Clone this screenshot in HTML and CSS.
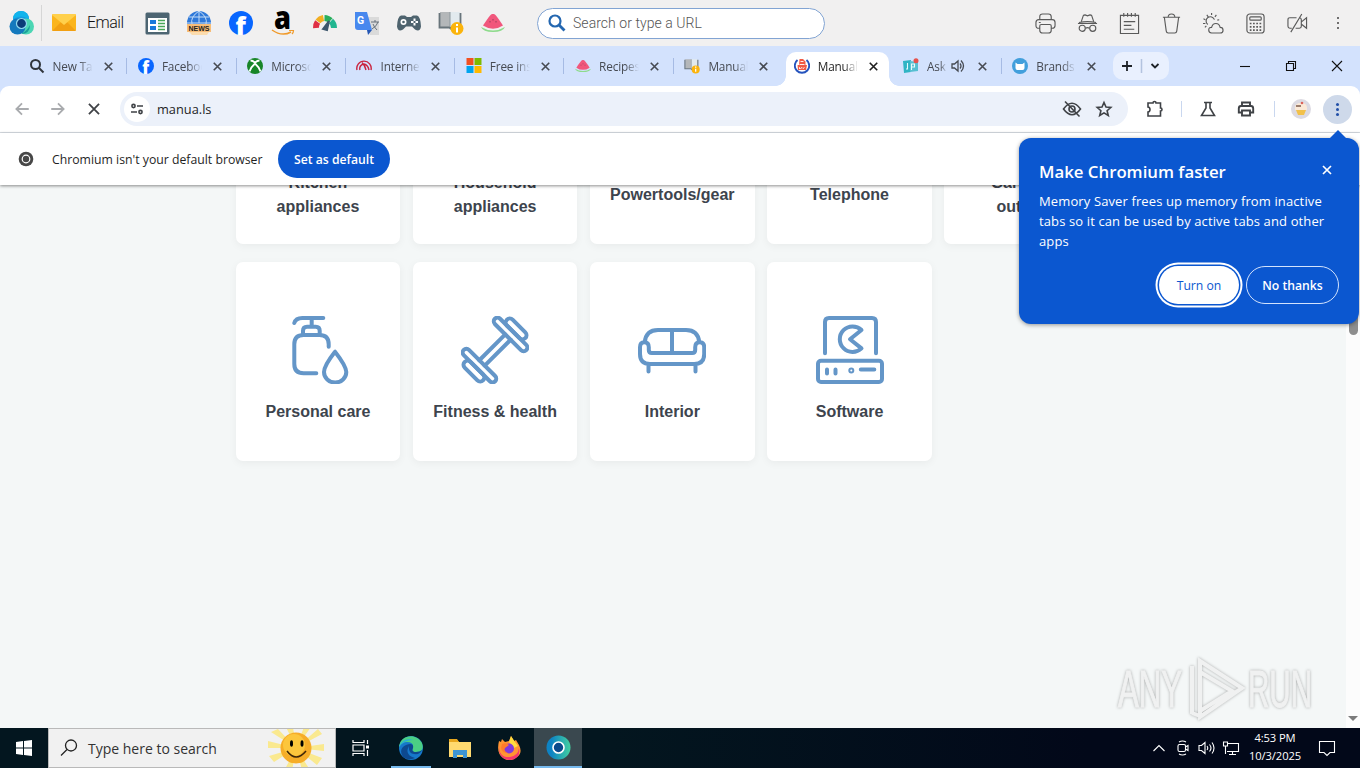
FILE: index.html
```html
<!DOCTYPE html>
<html lang="en">
  <head>
    <meta charset="utf-8" />
    <title>manua.ls</title>
    <link rel="stylesheet" href="styles.css">
  </head>
  <body>
    <!-- shared icons -->
    <svg class="defs">
      <symbol id="close" viewBox="0 0 16 16"><path d="M4 4l8 8M12 4l-8 8" fill="none" stroke="currentColor" stroke-width="1.7" /></symbol>
      <symbol id="melon" viewBox="0 0 24 24">
        <path d="M0 16q12 7 24 0q-2 5-12 5T0 16z" fill="#8edb8c" />
        <path d="M12 3c2 0 3 1 10 11.500q-10 6.500-20 0C9 4 10 3 12 3z" fill="#f1577c" />
        <path d="M9 10v1.500M12 8v1.500M15 10v1.500" stroke="#98405a" stroke-width="1" />
      </symbol>
      <symbol id="fb" viewBox="0 0 24 24">
        <circle cx="12" cy="12" r="12" fill="#0866ff" />
        <text x="6.500" y="23.500" font-family="Open Sans" font-weight="800" font-size="25" fill="#fff">f</text>
      </symbol>
      <symbol id="book" viewBox="0 0 26 26">
        <path d="M2 2h10v15H2z" fill="#b4b7b9" /><path d="M12 2h10v15H12z" fill="#e2eaee" />
        <path d="M1.500 3v14.500h10l1 1 1-1h9V3" fill="none" stroke="#68747b" stroke-width="1.800" />
        <path d="M12 2v15" stroke="#8d979c" />
        <circle cx="19" cy="18.500" r="6.500" fill="#fbb40c" />
        <path d="M19 14v2M19 17.500v5" stroke="#fff" stroke-width="2" />
      </symbol>
    </svg>

    <div class="launcher">
      <span class="logo">
        <svg width="26" height="26" viewBox="0 0 26 26">
          <circle cx="12" cy="9" r="8" fill="#159be0" /><circle cx="17" cy="16.500" r="8" fill="#4cd6b4" />
          <circle cx="8.500" cy="16.500" r="8" fill="#1479bd" /><path d="M4 9a8 8 0 0116 0q-8-5-16 0z" fill="#11b4ec" />
          <path d="M12 24q9 0 9-9-3 6-9 9z" fill="#1c9f9c" />
          <circle cx="12.500" cy="13.500" r="5" fill="#0b3b78" stroke="#8fd9ee" stroke-width="1.200" />
        </svg>
      </span>
      <span class="email">
        <svg width="24" height="18" viewBox="0 0 24 18">
          <rect width="24" height="17" rx="1.500" fill="#fbb51c" /><path d="M0 17L9 8h6l9 9z" fill="#f2a012" />
          <path d="M0 1q0-1 1-1h22q1 0 1 1L12 11z" fill="#ffd04c" />
        </svg>
        Email
      </span>
      <div class="apps">
        <span><svg width="25" height="23" viewBox="0 0 25 23">
          <rect x=".500" y=".500" width="24" height="22" rx="1.500" fill="#4d6572" /><path d="M3 6h19v14H3z" fill="#fff" />
          <path d="M5 8h6v4H5zM5 14h6v4H5z" fill="#1a79db" /><path d="M13 8.500h7M13 11.500h7M13 14.500h7M13 17.500h7" stroke="#48a858" stroke-width="1.5" />
        </svg></span>
        <span><svg width="26" height="26" viewBox="0 0 26 26">
          <circle cx="13" cy="13" r="12" fill="#2f79d9" /><path d="M1 13h24M3 7h20M13 1v12M13 1q-9 6-7 13M13 1q9 6 7 13" fill="none" stroke="#c3ddf8" stroke-width="1" />
          <path d="M1 14h24v8H1z" fill="#f7bd78" /><path d="M3 22h20l-2 3H6z" fill="#fbdcae" />
          <text x="2.500" y="20.800" font-family="Liberation Sans" font-weight="700" font-size="7" fill="#222">NEWS</text>
        </svg></span>
        <span><svg width="24" height="24"><use href="#fb" /></svg></span>
        <span><svg width="26" height="27" viewBox="0 0 26 27">
          <text x="4" y="19" font-family="Open Sans" font-weight="800" font-size="31" textLength="17" lengthAdjust="spacingAndGlyphs">a</text>
          <path d="M2 20q10 7 19 2" fill="none" stroke="#f09a2b" stroke-width="1.500" /><path d="M19 20.500h4.500q0 2-1.500 3.500" fill="none" stroke="#f09a2b" stroke-width="1.200" />
        </svg></span>
        <span><svg width="26" height="26" viewBox="0 0 26 26" fill="none" stroke-width="6">
          <path d="M4 18a9 9 0 011.600-6" stroke="#df3044" /><path d="M6 11.500a9 9 0 015.500-3.500" stroke="#f2ae22" />
          <path d="M12.500 8a9 9 0 016 2.500" stroke="#2aae5b" /><path d="M19 11a9 9 0 013 7" stroke="#22b690" />
          <path d="M11 19l6-8-2 9z" fill="#3c566c" stroke="#3c566c" stroke-width="2" />
        </svg></span>
        <span><svg width="26" height="26" viewBox="0 0 26 26">
          <path d="M11 7h14v18H16z" fill="#dadada" /><path d="M1 2h12l5 18H4q-3 0-3-3z" fill="#4888ee" /><path d="M13 20h5l-4 5z" fill="#2456b4" />
          <text x="3" y="14" font-family="Roboto" font-weight="700" font-size="10.500" fill="#fff">G</text>
          <path d="M17 12h8M21 10v2M18 19q5-3 6-7M19 14q1 3 4 6" fill="none" stroke="#66717a" />
        </svg></span>
        <span><svg width="26" height="20" viewBox="0 0 26 20">
          <path d="M5 2.500h4l2 1.500h4l2-1.500h4q3.500 1 4 11-1 6-6 3l-3-3h-6l-3 3q-5 3-6-3Q1.500 3.500 5 2.500z" fill="#4e636e" />
          <circle cx="7.500" cy="9" r="3" fill="#fff" /><circle cx="7.500" cy="9" r="1.300" fill="#4e636e" />
          <path d="M18.500 5.500v7M15 9h7" stroke="#fff" stroke-width="2" stroke-dasharray="2.500 2" />
        </svg></span>
        <span><svg width="26" height="26"><use href="#book" /></svg></span>
        <span><svg width="24" height="24"><use href="#melon" /></svg></span>
      </div>
      <div class="search">
        <svg width="18" height="18" viewBox="0 0 18 18" fill="none" stroke="#2467b0" stroke-width="2.200"><circle cx="7" cy="7" r="5.500" /><path d="M11 11l5.500 5.500" stroke-width="2.800" /></svg>
        Search or type a URL
      </div>
      <div class="tools">
        <span><svg viewBox="0 0 22 22"><path d="M5 7V4q0-3 3-3h6q3 0 3 3v3M5 16H4q-3 0-3-3v-3q0-3 3-3h14q3 0 3 3v3q0 3-3 3h-1M5 13.500q0-1.500 1.500-1.500h9q1.500 0 1.500 1.500V18q0 3-3 3H8q-3 0-3-3zM4 10h2" /></svg></span>
        <span><svg viewBox="0 0 22 22"><path d="M4.500 9l2-6q.500-1 2-1l2.500 1 2.500-1q1.500 0 2 1l2 6M2 10q9-2 18 0M1 11h20M9 16q2-1.500 4 0" /><circle cx="5.500" cy="16" r="3.200" /><circle cx="16.500" cy="16" r="3.200" /></svg></span>
        <span><svg viewBox="0 0 22 22"><path d="M1.500 2.500h19v19h-19zM5 0v4M9 0v4M13 0v4M17 0v4M5 9h12M5 13h8M5 17h11" /></svg></span>
        <span><svg viewBox="0 0 22 22"><path d="M2 4.500h18M3.500 4.500l2 14.500q.300 2 2 2h7q1.700 0 2-2l2-14.500M7.500 4.500q0-3.500 3.500-3.500t3.500 3.500" /></svg></span>
        <span><svg viewBox="0 0 22 22"><path d="M9 21q-3-.500-3-3.300T9 15q1-4 4.500-4t4.500 4q3 0 3 3t-3 3zM5 12a4.500 4.500 0 117-5M9 0v2M4 2l1.500 2M.500 6l2 1M0 11h2.500M2 15l1.500-1.500M14 2l-1.500 2M17 7l-2 .500" /></svg></span>
        <span><svg viewBox="0 0 22 22"><rect x="2" y="1" width="18" height="20" rx="3" /><rect x="5" y="4" width="12" height="3.500" rx="1" /><path d="M5 11h12M5 14.500h12M5 18h12" stroke-width="1.800" stroke-dasharray="1.800 1.600" /></svg></span>
        <span><svg viewBox="0 0 22 22"><path d="M10 5H3Q1 5 1 7v7q0 2 2 2h2M9 16h4q2 0 2-2V7q0-1.500-1.500-2M15.500 9l5-4v11l-5-4M15.500 1L4 20" /></svg></span>
        <span class="dots"></span>
      </div>
    </div>

    <div class="tabs">
      <div class="tab">
        <svg class="fav" viewBox="0 0 16 16" fill="none" stroke="#30353c" stroke-width="2"><circle cx="6.500" cy="6.500" r="4.500" /><path d="M10 10l4.500 4.500" /></svg>
        <span class="title">New Tab</span><svg class="close"><use href="#close" /></svg>
      </div>
      <div class="tab">
        <svg class="fav"><use href="#fb" /></svg>
        <span class="title">Facebook</span><svg class="close"><use href="#close" /></svg>
      </div>
      <div class="tab">
        <svg class="fav" viewBox="0 0 16 16"><circle cx="8" cy="8" r="8" fill="#178528" /><path d="M3.500 2.500q2 0 4.500 2 2.500-2 4.500-2M8 5.500Q3.500 9.500 2.500 13.500M8 5.500q4.500 4 5.500 8" fill="none" stroke="#fff" stroke-width="1.800" /></svg>
        <span class="title">Microsoft</span><svg class="close"><use href="#close" /></svg>
      </div>
      <div class="tab">
        <svg class="fav" viewBox="0 0 16 16" fill="none" stroke="#c9243f" stroke-width="1.400"><path d="M1 12a7.200 7.200 0 1114 0M4 12a4.500 4.500 0 014-6M8 6q4 1 5 6M6 4.500q3 3 4 7.500" /></svg>
        <span class="title">Internet</span><svg class="close"><use href="#close" /></svg>
      </div>
      <div class="tab">
        <svg class="fav" viewBox="0 0 16 16"><path d="M.500 0h7v7h-7z" fill="#f25022" /><path d="M8.500 0h7v7h-7z" fill="#7fba00" /><path d="M.500 8h7v7h-7z" fill="#00a4ef" /><path d="M8.500 8h7v7h-7z" fill="#ffb900" /></svg>
        <span class="title">Free install</span><svg class="close"><use href="#close" /></svg>
      </div>
      <div class="tab">
        <svg class="fav"><use href="#melon" /></svg>
        <span class="title">Recipes</span><svg class="close"><use href="#close" /></svg>
      </div>
      <div class="tab plain">
        <svg class="fav"><use href="#book" /></svg>
        <span class="title">Manuals</span><svg class="close"><use href="#close" /></svg>
      </div>
      <div class="tab active plain">
        <svg class="fav" viewBox="0 0 16 16"><path d="M3.500 2a7.200 7.200 0 109 0" fill="none" stroke="#2553bd" stroke-width="1.900" /><path d="M5.500 1H9l2.500 2.500V7H13l-1 5H4L3.500 7H5z" fill="#f15a45" /><path d="M6.500 3.500h3M5.500 6.500h5M5.500 11V9.500l1 1 1.500-1 1 1 1.500-1" fill="none" stroke="#fff" stroke-width=".9" /></svg>
        <span class="title">Manuals</span><svg class="close"><use href="#close" /></svg>
      </div>
      <div class="tab audio">
        <svg class="fav" viewBox="0 0 16 16"><path d="M0 3l8-1v12l-7 1z" fill="#30b4c4" /><path d="M7 3l8 1v9l-8 1z" fill="#56bfd1" /><circle cx="13" cy="2.800" r="2.500" fill="#e6534e" /><path d="M4.500 5v6H3M8.500 12V6h3v3h-3" fill="none" stroke="#e6fafc" stroke-width="1.100" /></svg>
        <span class="title">Ask</span>
        <svg class="sound" viewBox="0 0 14 14" fill="none" stroke="#464a52" stroke-width="1.300"><path d="M1 5h2.500L7 2v10L3.500 9H1z" /><path d="M9 4.500q2 2.500 0 5M10 1.500q5 5.500 0 11" /></svg>
        <svg class="close"><use href="#close" /></svg>
      </div>
      <div class="tab plain">
        <svg class="fav" viewBox="0 0 16 16"><circle cx="8" cy="8" r="8" fill="#429fdc" /><path d="M3.500 4.500l2 1.500h5l2-1.500v5.500q0 2-2 2h-5q-2 0-2-2z" fill="#fff" /></svg>
        <span class="title">Brands</span><svg class="close"><use href="#close" /></svg>
      </div>
      <div class="new-tab">
        <svg width="56" height="28" viewBox="0 0 56 28" fill="none" stroke="#1e2227" stroke-width="1.800"><path d="M14 9v10M9 14h10" /><path d="M28.500 7v14" stroke="#b3c3df" stroke-width="1.500" /><path d="M38.500 12l3.500 3.500 3.500-3.500" /></svg>
      </div>
      <div class="window-buttons">
        <svg width="12" height="12" viewBox="0 0 12 12"><path d="M1 6.500h10" /></svg>
        <svg width="12" height="12" viewBox="0 0 12 12"><path d="M1.500 3.500h7v7h-7zM3.500 3.500v-2h7v7h-2" /></svg>
        <svg width="12" height="12" viewBox="0 0 12 12"><path d="M1 1l10 10M11 1L1 11" /></svg>
      </div>
    </div>

    <div class="toolbar-wrap">
      <div class="toolbar">
        <div class="nav">
          <svg class="dim" viewBox="0 0 16 16"><path d="M14 8H3M8 3L3 8l5 5" /></svg>
          <svg class="dim" viewBox="0 0 16 16"><path d="M2 8h11M8 3l5 5-5 5" /></svg>
          <svg viewBox="0 0 16 16"><path d="M3.500 3.500l9 9M12.500 3.500l-9 9" /></svg>
        </div>
        <div class="omnibox">
          <span class="site-info"><svg width="14" height="14" viewBox="0 0 14 14" fill="none" stroke="#24282d" stroke-width="1.500"><circle cx="3.500" cy="4" r="1.600" /><path d="M7 4h6M1 10h6" /><circle cx="10.500" cy="10" r="1.600" /></svg></span>
          <span class="url">manua.ls</span>
          <svg width="20" height="20" viewBox="0 0 20 20"><path d="M1.500 10Q10-1.500 18.500 10 10 21.500 1.500 10z" /><circle cx="10" cy="10" r="3" /><path d="M3 2.500l14.500 15" /></svg>
          <svg width="18" height="18" viewBox="0 0 18 18"><path d="M9 2.500l2 4.600 4.800.400-3.700 3.200 1.200 4.800L9 12.900l-4.300 2.600 1.200-4.800L2.200 7.500 7 7.100z" /></svg>
        </div>
        <div class="actions">
          <svg width="20" height="20" viewBox="0 0 20 20"><path d="M3 4h5q0-1.500 1.500-1.500T11 4h4.500v5Q17 9 17 10.500T15.500 12v5H3v-4q2-.300 2-2.500T3 8z" /></svg>
          <i></i>
          <svg class="flask" width="18" height="18" viewBox="0 0 18 18"><path d="M5 2.500h8M7 3v5l-4.500 7.500h13L11 8V3" /></svg>
          <svg class="print" width="18" height="18" viewBox="0 0 18 18"><path d="M5 6V2.500h8V6M5 12.500H1.800V8.500Q1.800 6 4 6h10q2.200 0 2.200 2.500v4H13M5 10.500h8V15.500H5z" stroke-width="1.900" /></svg>
          <i></i>
          <svg class="avatar" width="20" height="20" viewBox="0 0 20 20"><circle cx="10" cy="10" r="10" fill="#dcdae2" /><path d="M4 9q0-5 6-5t6 5v2H4z" fill="#fbe9d7" /><path d="M5 11h10l-2 5H7z" fill="#f2c14b" /><path d="M5 7h5" stroke="#684535" stroke-width="1.300" /><circle cx="11" cy="4" r="1.300" fill="#dd6258" /></svg>
          <span class="menu dots"></span>
        </div>
      </div>
    </div>

    <div class="infobar">
      <svg width="16" height="16" viewBox="0 0 16 16"><circle cx="8" cy="8" r="7.300" fill="#474747" /><circle cx="8" cy="8" r="3.800" fill="none" stroke="#fff" stroke-width="1.200" /></svg>
      <span class="info-text">Chromium isn't your default browser</span>
      <button class="default-btn">Set as default</button>
    </div>

    <div class="page">
      <div class="cards">
        <div class="card"><div class="icon"></div><div class="label">Kitchen appliances</div></div>
        <div class="card"><div class="icon"></div><div class="label">Household appliances</div></div>
        <div class="card"><div class="icon"></div><div class="label">Powertools/gear</div></div>
        <div class="card"><div class="icon"></div><div class="label">Telephone</div></div>
        <div class="card"><div class="icon"></div><div class="label">Garden &amp; outdoor</div></div>
        <div class="card">
          <svg class="icon" viewBox="0 0 68 68"><path d="M10.300 7q1.500-5 8-5h21M27.700 2v8M19 19v-4.300q0-4 4-4h8.700q4 0 4 4V19M44.700 30.700v-2.400q0-9.300-9.300-9.300H19.600q-9.300 0-9.300 9.300V48q0 9.300 9.300 9.300h12.700M51 35.700q-11 14-11 20.300a11.100 10.500 0 0022.300 0Q62 49.700 51 35.700z" /></svg>
          <div class="label">Personal care</div>
        </div>
        <div class="card">
          <svg class="icon" viewBox="0 0 68 68"><g transform="translate(34 34) rotate(-45)"><rect x="18.300" y="-22.200" width="7.400" height="44.400" rx="3.700" /><rect x="25.700" y="-13" width="8.200" height="26" rx="4" /><rect x="-25.700" y="-22.200" width="7.400" height="44.400" rx="3.700" /><rect x="-33.900" y="-13" width="8.200" height="26" rx="4" /><path d="M-18.300-3.800h36.600M-18.300 3.800h36.600" /></g></svg>
          <div class="label">Fitness &amp; health</div>
        </div>
        <div class="card">
          <svg class="icon" viewBox="0 0 68 68"><path d="M6.800 26Q8 14 20 14h28q12 0 13.200 12M34 14v23M10.500 48v7.500M57.500 48v7.500M6.300 26.300q4.500 0 4.500 5V34q0 3 3 3h40.400q3 0 3-3v-2.700q0-5 4.500-5t4.500 5V38q0 10-10 10H12Q2 48 2 38v-6.700q0-5 4.300-5z" /></svg>
          <div class="label">Interior</div>
        </div>
        <div class="card">
          <svg class="icon" viewBox="0 0 68 68"><path d="M9 37.300V6q0-4 4-4h43q4 0 4 4v31.300M11 53.500v4M19.500 53.500v4M44.800 53.500h13.500M45.500 14a12.800 12.800 0 100 18.400L34 23.300z" /><rect x="2" y="44.700" width="64" height="21.300" rx="3" /><circle cx="35.300" cy="54.500" r="1" /></svg>
          <div class="label">Software</div>
        </div>
      </div>
      <div class="scrollbar"><span class="thumb"></span><span class="arrow"></span></div>
      <svg class="watermark" viewBox="0 0 200 68">
        <g font-family="Liberation Sans Narrow, Liberation Sans" font-size="51">
          <text x="2" y="52" textLength="64" lengthAdjust="spacingAndGlyphs">ANY</text>
          <text x="132" y="52" textLength="64" lengthAdjust="spacingAndGlyphs">RUN</text>
        </g>
        <path d="M84 6l42 27-42 29zM76 11v48M84 17l32 19-32 20M76 58l8 3" />
      </svg>
    </div>

    <div class="bubble">
      <svg class="bubble-close"><use href="#close" /></svg>
      <h2>Make Chromium faster</h2>
      <p>Memory Saver frees up memory from inactive<br>tabs so it can be used by active tabs and other<br>apps</p>
      <div class="bubble-buttons">
        <button class="turn-on">Turn on</button>
        <button class="no-thanks">No thanks</button>
      </div>
    </div>

    <div class="taskbar">
      <span class="start"><svg width="16" height="16" viewBox="0 0 16 16" fill="#fff"><path d="M0 2l7-1v6.500H0zM8 1l8-1v7.500H8zM0 8.500h7V15l-7-1zM8 8.500h8V16l-8-1z" /></svg></span>
      <div class="task-search">
        <svg width="18" height="18" viewBox="0 0 18 18" fill="none" stroke="#222" stroke-width="1.300"><circle cx="11" cy="6.500" r="5.500" /><path d="M7 10.500L1 16.500" /></svg>
        <span>Type here to search</span>
        <svg class="sun" width="56" height="38" viewBox="0 0 56 38">
          <path d="M28 19L0 12v7zM28 19L1 27l5 6zM28 19L3 3l7-3zM28 19L18-2h7zM28 19L36-2h7zM28 19L54 5l-4-5zM28 19l28-4v7zM28 19l26 10-5 7zM28 19l14 22h-8zM28 19L24 42h-8z" fill="#fae98f" />
          <circle cx="28" cy="19" r="15.500" fill="#f6ad28" /><circle cx="26" cy="16" r="11" fill="#fcc63c" />
          <ellipse cx="23.500" cy="14.500" rx="1.500" ry="3.200" /><ellipse cx="34" cy="14.500" rx="1.500" ry="3.200" />
          <path d="M19 22q9 12 19 0" fill="none" stroke="#3d2607" stroke-width="1.500" />
        </svg>
      </div>
      <div class="task-apps">
        <span><svg width="18" height="16" viewBox="0 0 18 16" fill="none" stroke="#fff" stroke-width="1.200"><path d="M1 0v2.500h11V0M1 16v-2.500h11V16M1 5h11v6H1zM15.500 0v4M15.500 10v6" /><path d="M14 5.500h3v3h-3z" fill="#fff" stroke="none" /></svg></span>
        <span class="running"><svg width="24" height="24" viewBox="0 0 24 24">
          <circle cx="12" cy="12" r="12" fill="#1678ca" /><path d="M0 11C1-1 17-4 23 7q3 9-6 9-5 0-3-4 1-6-6-6-5 0-8 5z" fill="#4bcf84" /><path d="M0 11Q4 1 14 4q-9 0-14 7z" fill="#29add5" />
          <path d="M10 10q-5 9 6 12-7 3-12-1-5-8 3-12 8-3 7 3-2 4 3 4 4 0 6-2-2 5-8 4-6-1-5-8z" fill="#0d498f" />
        </svg></span>
        <span><svg width="22" height="19" viewBox="0 0 22 19"><path d="M0 1h8l2 2h12v15H0z" fill="#ffda70" /><path d="M0 0h8l2 3H0z" fill="#e8a71e" /><path d="M4 19v-8h14v8h-4v-3H8v3z" fill="#3f95d2" /></svg></span>
        <span><svg width="24" height="24" viewBox="0 0 24 24"><path d="M2 5l2 1 1-3 3 3 4-1 2-5 3 5 2-1 3 5q4 8-2 12-7 6-14 1T2 5z" fill="#ff9532" /><path d="M2 10q0 12 11 11 8-1 9-9 2 11-9 12Q1 23 2 10z" fill="#f3376e" /><path d="M14 0l4 6 3 4-4 2-5-6z" fill="#ffdc3e" /><circle cx="12" cy="12.500" r="5" fill="#8139dc" /><path d="M5 8q4-2 7 1l-4 3q-2 3 3 5-6 0-7-5z" fill="#ff7b2b" /></svg></span>
        <span class="current"><svg width="25" height="25" viewBox="0 0 25 25"><defs><linearGradient id="ring"><stop offset=".2" stop-color="#0d83c4" /><stop offset="1" stop-color="#43d0a0" /></linearGradient></defs><circle cx="12.500" cy="12.500" r="12" fill="url(#ring)" /><circle cx="12.500" cy="12.500" r="5.500" fill="#0b4a8b" stroke="#fff" stroke-width="1.600" /></svg></span>
      </div>
      <div class="tray">
        <svg viewBox="0 0 18 16"><path d="M3.500 11L9 5.500l5.500 5.500" /></svg>
        <svg viewBox="0 0 18 16"><rect x="4" y="4.500" width="7.500" height="7" rx="1.500" /><path d="M11.500 7L14 5.500v5L11.500 9M5 2q3.500-2 7 0M5 14q3.500 2 7 0" /></svg>
        <svg viewBox="0 0 18 16"><path d="M1 5.500h2.500L7 2.500v11l-3.500-3H1zM9 6q1.500 2 0 4M11.500 4.500q3 3.500 0 7M14 2.500q4 5.500 0 11" /></svg>
        <svg viewBox="0 0 18 16"><path d="M6 3.500h10.500v8H5M10.500 11.500v3M7 14.500h7M1.500 2h4v4h-4zM3.500 6v8" /></svg>
        <div class="clock">4:53 PM<br>10/3/2025</div>
        <svg class="notice" viewBox="0 0 18 18"><path d="M1.500 2.500h15v11H12l-3 3-3-3H1.500z" /></svg>
      </div>
    </div>
  </body>
</html>
```
FILE: styles.css
```css
* {
  margin: 0;
  padding: 0;
  box-sizing: border-box;
}
body {
  width: 1360px;
  height: 768px;
  overflow: hidden;
  display: flex;
  flex-direction: column;
  font-family: "Open Sans", "Noto Sans", sans-serif;
  font-size: 12px;
  color: #1f1f1f;
  background: #f4f7f7;
  position: relative;
}
svg {
  flex: none;
}
button {
  font-family: inherit;
  border: none;
}
.defs {
  position: absolute;
  width: 0;
  height: 0;
}

/* launcher */
.launcher {
  height: 46px;
  flex: none;
  display: flex;
  align-items: center;
  background: #f1f0f0;
  font-family: Roboto, sans-serif;
  font-weight: 300;
}
.logo {
  width: 42px;
  height: 36px;
  padding-left: 9px;
  display: flex;
  align-items: center;
  border-right: 1px solid #d6d6d6;
}
.email {
  width: 94px;
  padding-left: 10px;
  display: flex;
  align-items: center;
  gap: 11px;
  font-size: 16px;
  letter-spacing: -0.5px;
  line-height: 20px;
  padding-bottom: 1px;
  color: #111;
}
.apps,
.tools {
  display: flex;
}
.apps span,
.tools span {
  width: 42px;
  height: 46px;
  display: flex;
  align-items: center;
  justify-content: center;
}
.search {
  width: 288px;
  height: 31px;
  margin-left: 23px;
  padding-left: 10px;
  display: flex;
  align-items: center;
  gap: 7px;
  border: 1px solid #82a4d3;
  border-radius: 16px;
  background: #fff;
  font-size: 14px;
  letter-spacing: 0.05px;
  color: #555;
}
.tools {
  margin-left: auto;
  padding-right: 2px;
}
.tools svg {
  width: 21px;
  height: 21px;
  fill: none;
  stroke: #5a5a5a;
  stroke-width: 1.2;
}
.tools span:last-child {
  width: 40px;
}
.dots::before {
  content: "";
  width: 2.4px;
  height: 2.4px;
  border-radius: 50%;
  background: #444;
  box-shadow: 0 -5px #444, 0 5px #444;
}

/* tabs */
.tabs {
  height: 40px;
  flex: none;
  display: flex;
  padding: 6px 0 0 17px;
  background: #d3e2fd;
}
.tab {
  width: 109.3px;
  height: 28px;
  flex: none;
  padding-left: 11.6px;
  display: flex;
  align-items: center;
  position: relative;
  color: #464a52;
}
.tab::after {
  content: "";
  width: 1px;
  height: 16px;
  position: absolute;
  right: -1px;
  top: 6px;
  background: #a6bbe4;
}
.tab.plain::after {
  display: none;
}
.fav {
  width: 16px;
  height: 16px;
}
.title {
  width: 40px;
  margin: 0 8px;
  overflow: hidden;
  white-space: nowrap;
  font-size: 11.8px;
  letter-spacing: -0.15px;
  -webkit-mask-image: linear-gradient(to right, #000 65%, transparent);
  mask-image: linear-gradient(to right, #000 65%, transparent);
}
.close {
  width: 15px;
  height: 15px;
}
.audio .title {
  width: 20px;
  margin-right: 4px;
}
.sound {
  width: 14px;
  height: 14px;
  margin-right: 10px;
}
.active {
  width: 103px;
  height: 34px;
  margin: 0 2.3px 0 4px;
  padding: 0 0 6px 7.6px;
  background: #fff;
  border-radius: 10px 10px 0 0;
  color: #1f1f1f;
}
.tab.active::before,
.tab.active::after {
  content: "";
  display: block;
  position: absolute;
  width: 10px;
  height: 10px;
  top: 24px;
  left: -10px;
  right: auto;
  background: radial-gradient(circle at 0 0, transparent 9.5px, #fff 10px);
}
.tab.active::after {
  left: 103px;
  background: radial-gradient(circle at 100% 0, transparent 9.5px, #fff 10px);
}
.new-tab {
  width: 56px;
  height: 28px;
  margin-left: 3px;
  border-radius: 10px;
  background: #e9f0fe;
}
.window-buttons {
  height: 28px;
  margin-left: auto;
  padding-right: 17px;
  display: flex;
  align-items: center;
  gap: 34px;
}
.window-buttons svg {
  fill: none;
  stroke: #111;
  stroke-width: 1.1;
}

/* toolbar */
.toolbar-wrap {
  flex: none;
  background: #d3e2fd;
}
.toolbar {
  height: 47px;
  padding-left: 13px;
  display: flex;
  align-items: center;
  background: #fff;
  border-bottom: 1px solid #dadfe5;
  border-radius: 9px 9px 0 0;
}
.toolbar svg {
  fill: none;
  stroke: #3f4246;
  stroke-width: 1.6;
}
.nav {
  width: 107px;
  display: flex;
  gap: 18px;
}
.nav svg {
  width: 18px;
  height: 18px;
}
.toolbar .dim {
  stroke: #a9abae;
}
.omnibox {
  width: 1008px;
  height: 34px;
  padding: 0 15px 0 4px;
  display: flex;
  align-items: center;
  gap: 13px;
  border-radius: 17px;
  background: #ecf1fa;
}
.site-info {
  width: 26px;
  height: 26px;
  display: flex;
  align-items: center;
  justify-content: center;
  border-radius: 50%;
  background: #fff;
}
.url {
  flex: 1;
  margin-left: -6px;
  font-size: 12.8px;
}
.actions {
  flex: 1;
  padding-left: 17px;
  display: flex;
  align-items: center;
  gap: 16px;
}
.actions i {
  width: 1px;
  height: 16px;
  background: #c9d7ef;
}
.flask {
  margin-left: 1px;
}
.print {
  margin: 0 3px 0 4px;
}
.toolbar .avatar {
  stroke: none;
}
.menu {
  width: 29px;
  height: 29px;
  margin-left: -4px;
  display: flex;
  align-items: center;
  justify-content: center;
  border-radius: 50%;
  background: #ced9ea;
}
.menu::before {
  width: 3px;
  height: 3px;
  background: #2350a8;
  box-shadow: 0 -5px #2350a8, 0 5px #2350a8;
}

/* infobar */
.infobar {
  height: 52px;
  flex: none;
  padding-left: 18px;
  display: flex;
  align-items: center;
  background: #fff;
  position: relative;
  z-index: 1;
  box-shadow: 0 1px 3px rgba(0, 0, 0, 0.45);
}
.info-text {
  width: 226px;
  margin-left: 18px;
  font-size: 12.25px;
  white-space: nowrap;
}
.default-btn {
  width: 112px;
  height: 38px;
  border-radius: 19px;
  background: #0b57d0;
  color: #fff;
  font-size: 12.2px;
  font-weight: 600;
}

/* page */
.page {
  height: 543px;
  flex: none;
  overflow: hidden;
  position: relative;
  display: flex;
  justify-content: space-between;
  background: #f4f7f7;
}
.cards {
  width: 874px;
  margin: -140px 0 0 235.7px;
  display: grid;
  grid-template-columns: repeat(5, 164.5px);
  grid-auto-rows: 199px;
  gap: 18px 12.7px;
}
.card {
  padding: 54px 20px 0;
  display: flex;
  flex-direction: column;
  align-items: center;
  border-radius: 7px;
  background: #fff;
  box-shadow: 0 2px 8px rgba(0, 0, 0, 0.05);
}
.icon {
  width: 68px;
  height: 68px;
  flex: none;
  fill: none;
  stroke: #6496c8;
  stroke-width: 4;
  stroke-linecap: round;
  stroke-linejoin: round;
}
.label {
  height: 48px;
  margin: 4px -15px 0;
  display: flex;
  align-items: center;
  text-align: center;
  font: bold 16px/24px "Liberation Sans", Arial, sans-serif;
  color: #3d444d;
}
.card:nth-child(-n + 2) .label,
.card:nth-child(5) .label {
  width: 100px;
}
.scrollbar {
  width: 14px;
  height: 543px;
  display: flex;
  flex-direction: column;
  align-items: center;
  justify-content: space-between;
  background: #fcfcfc;
}
.thumb {
  width: 9px;
  height: 150px;
  border-radius: 5px;
  background: #8e8e8e;
}
.arrow {
  margin-bottom: 7px;
  border: 5px solid transparent;
  border-top-color: #7b7b7b;
  border-bottom: none;
}
.watermark {
  position: absolute;
  left: 1116px;
  top: 470px;
  width: 200px;
  height: 68px;
  fill: #f0f1f1;
  stroke: #f0f1f1;
  stroke-width: 1;
  filter: drop-shadow(0 0 1.5px rgba(0, 0, 0, 0.3));
}
.watermark path {
  fill: none;
  stroke-width: 4;
}

/* bubble */
.bubble {
  position: absolute;
  z-index: 2;
  left: 1019px;
  top: 138px;
  width: 340px;
  height: 186px;
  padding: 21px 20px 0;
  border-radius: 12px;
  background: #0b57d0;
  color: #fff;
  box-shadow: 0 1px 4px rgba(0, 0, 0, 0.4);
}
.bubble::before {
  content: "";
  position: absolute;
  left: 311px;
  top: -8px;
  border: 8px solid transparent;
  border-top: none;
  border-bottom-color: #0b57d0;
}
.bubble-close {
  position: absolute;
  right: 24px;
  top: 24px;
  width: 16px;
  height: 16px;
}
.bubble h2 {
  font-size: 16.8px;
  line-height: 26px;
  font-weight: 600;
  white-space: nowrap;
}
.bubble p {
  margin-top: 6px;
  font-size: 13px;
  letter-spacing: 0.12px;
  line-height: 20px;
  white-space: nowrap;
}
.bubble-buttons {
  margin-top: 15px;
  display: flex;
  justify-content: flex-end;
  gap: 7px;
}
.bubble-buttons button {
  height: 38px;
  border-radius: 19px;
  font-size: 12.2px;
  font-weight: 600;
}
.bubble-buttons .turn-on {
  width: 80px;
  background: #fff;
  color: #0b57d0;
  font-weight: 500;
  box-shadow: 0 0 0 1.5px #0b57d0, 0 0 0 3.5px #fff;
}
.bubble-buttons .no-thanks {
  width: 93px;
  border: 1px solid #d3e3fd;
  background: transparent;
  color: #fff;
}

/* taskbar */
.taskbar {
  height: 40px;
  flex: none;
  display: flex;
  background: linear-gradient(to right, #03161f 45%, #020819 80%);
}
.start {
  width: 48px;
  display: flex;
  align-items: center;
  justify-content: center;
}
.task-search {
  width: 288px;
  padding-left: 11px;
  display: flex;
  align-items: center;
  gap: 10px;
  background: #f1f1f1;
  border: 1px solid #b9b9b9;
  font-size: 14px;
  color: #333;
}
.sun {
  margin-left: auto;
  margin-right: 11px;
}
.task-apps {
  display: flex;
}
.task-apps span {
  width: 49px;
  display: flex;
  align-items: center;
  justify-content: center;
}
.running {
  background: linear-gradient(#76b9ed, #76b9ed) 6px 38px / 40px 2px no-repeat;
}
.running,
.running ~ span {
  padding-left: 3px;
}
.task-apps .current {
  width: 48px;
  margin-left: 2px;
  padding: 0;
  background: #3a484f;
  border-bottom: 2px solid #76b9ed;
}
.tray {
  margin-left: auto;
  width: 210px;
  display: flex;
  align-items: center;
  gap: 6px;
}
.tray svg {
  width: 18px;
  height: 16px;
  fill: none;
  stroke: #fff;
  stroke-width: 1.1;
}
.clock {
  width: 54px;
  margin: -2px 0 0 2px;
  text-align: center;
  color: #fff;
  font-size: 11.2px;
  letter-spacing: -0.1px;
  line-height: 18px;
  white-space: nowrap;
}
.tray .notice {
  height: 18px;
  margin-left: 10px;
}
```
